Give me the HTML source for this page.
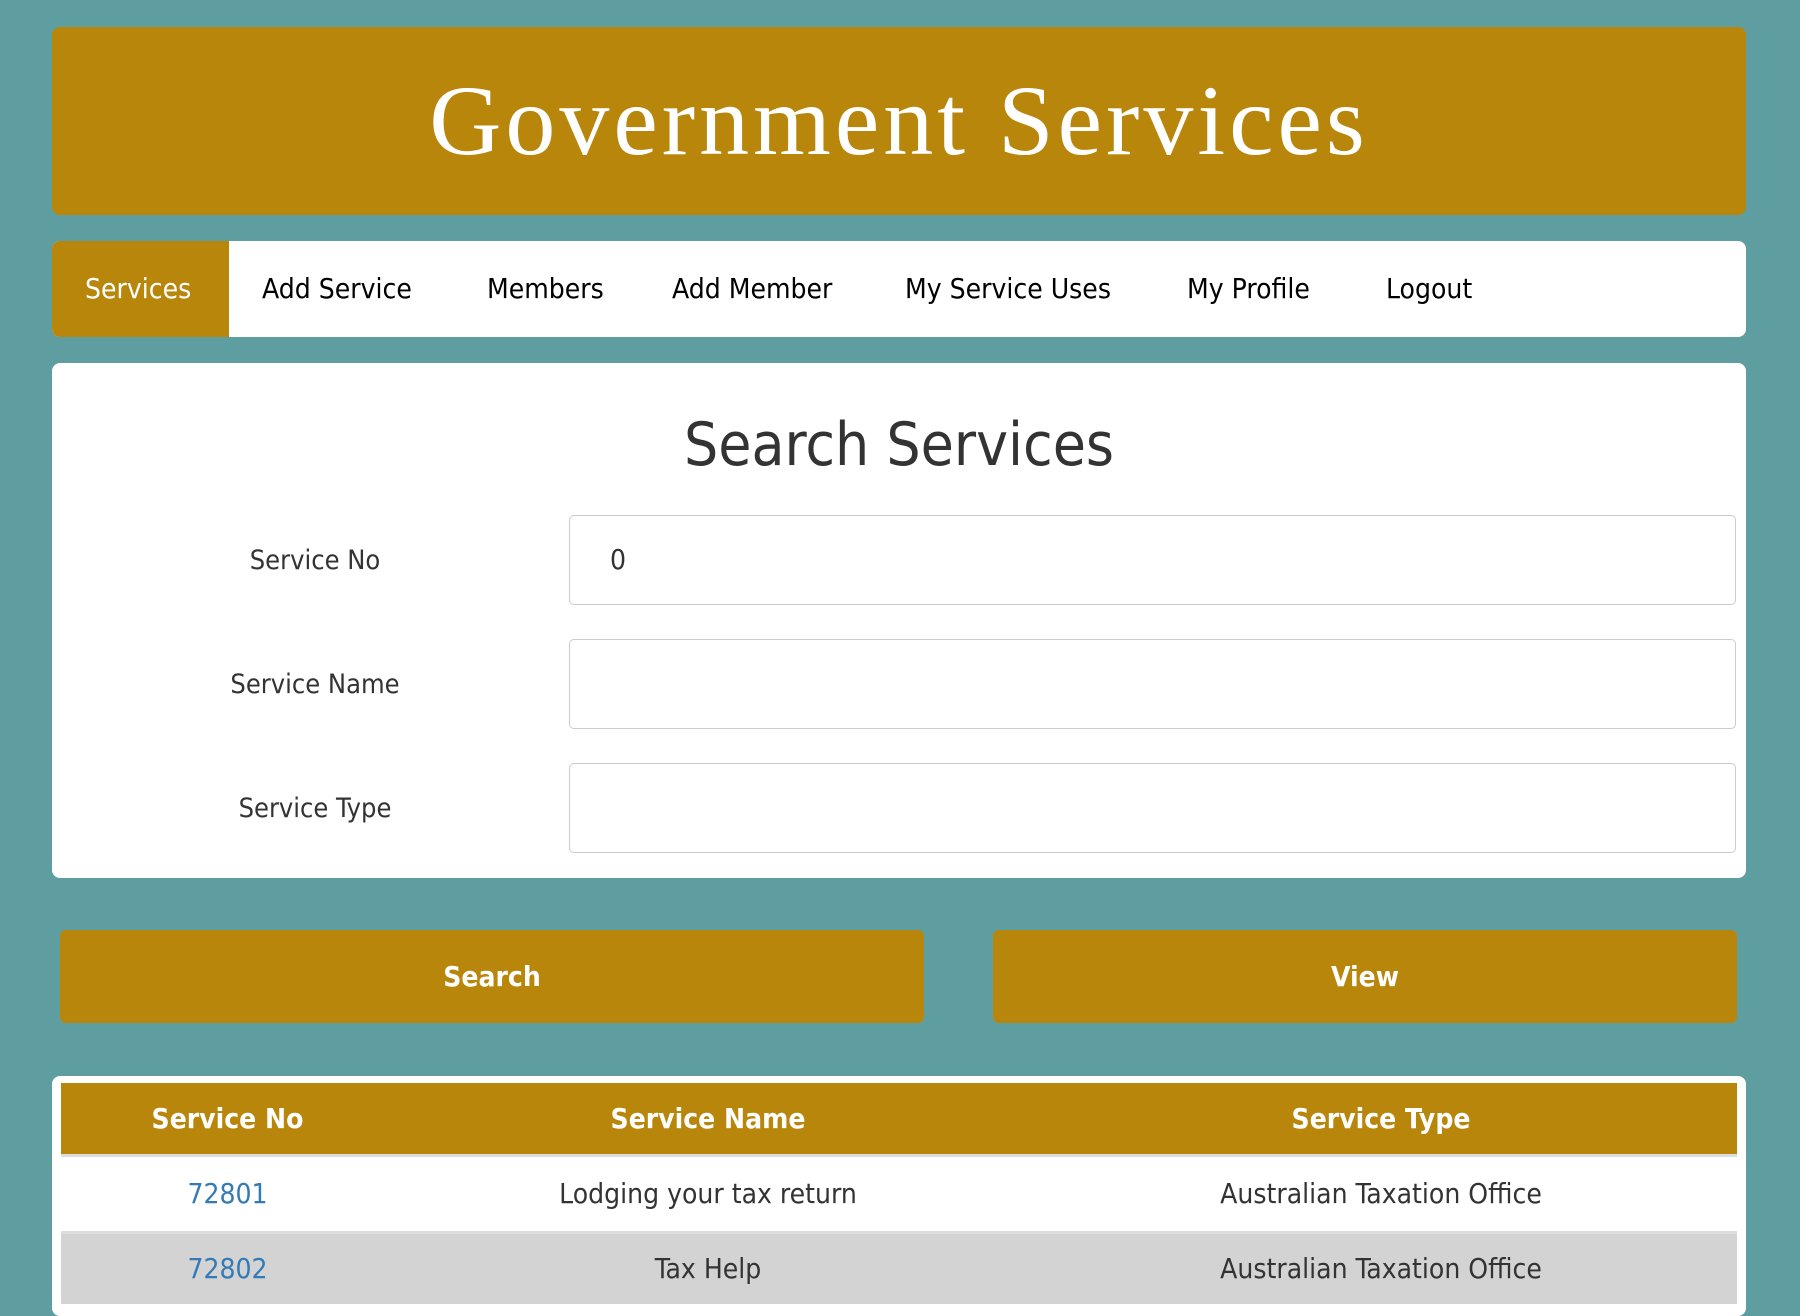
<!DOCTYPE html>
<html><head><meta charset="utf-8"><style>
*{margin:0;padding:0;box-sizing:border-box}
body{width:1800px;height:1300px;background:#5f9ea0;position:relative;overflow:hidden;font-family:"DejaVu Sans Condensed","Liberation Sans",sans-serif;color:#333}
.a{position:absolute}
.hdr{left:52px;top:27px;width:1694px;height:188px;background:#b8860b;border-radius:8px;color:#fff;font-family:"Liberation Serif",serif;font-size:100px;letter-spacing:4px;text-align:center;line-height:188px}
.nav{left:52px;top:241px;width:1694px;height:96px;background:#fff;border-radius:8px;overflow:hidden}
.nav .t{position:absolute;top:0;line-height:96px;font-size:28px;color:#000}
.act{left:0;top:0;width:177px;height:96px;background:#b8860b}
.panel{left:52px;top:363px;width:1694px;height:515px;background:#fff;border-radius:8px}
.lbl{width:400px;text-align:center;font-size:27px;left:115px}
.inp{left:569px;width:1167px;height:90px;border:1px solid #ccc;border-radius:5px;background:#fff;font-size:28px;padding-left:40px;line-height:88px}
.btn{top:930px;height:93px;background:#b8860b;border-radius:6px;color:#fff;font-size:28px;font-weight:bold;text-align:center;line-height:93px}
.tbl{left:52px;top:1076px;width:1694px;height:240px;background:#fff;border-radius:8px}
.row{left:61px;width:1676px}
.c{position:absolute;text-align:center;top:0}
</style></head><body>
<div class="a hdr">Government Services</div>
<div class="a nav">
<div class="a act"></div>
<span class="t" style="left:33px;color:#fff">Services</span>
<span class="t" style="left:210px">Add Service</span>
<span class="t" style="left:435px">Members</span>
<span class="t" style="left:620px">Add Member</span>
<span class="t" style="left:853px">My Service Uses</span>
<span class="t" style="left:1135px">My Profile</span>
<span class="t" style="left:1334px">Logout</span>
</div>
<div class="a panel"></div>
<div class="a" style="left:52px;top:410px;width:1694px;text-align:center;font-size:60px;color:#333">Search Services</div>
<div class="a lbl" style="top:545px">Service No</div>
<div class="a lbl" style="top:669px">Service Name</div>
<div class="a lbl" style="top:793px">Service Type</div>
<div class="a inp" style="top:515px">0</div>
<div class="a inp" style="top:639px"></div>
<div class="a inp" style="top:763px"></div>
<div class="a btn" style="left:60px;width:864px">Search</div>
<div class="a btn" style="left:993px;width:744px">View</div>
<div class="a tbl"></div>
<div class="a row" style="top:1083px;height:71px;background:#b8860b;color:#fff;font-weight:bold;font-size:28px;line-height:71px">
<div class="c" style="left:0;width:333px">Service No</div>
<div class="c" style="left:339px;width:616px">Service Name</div>
<div class="c" style="left:1016px;width:608px">Service Type</div>
</div>
<div class="a row" style="top:1154px;height:3px;background:#ddd"></div>
<div class="a row" style="top:1157px;height:74px;background:#fff;font-size:28px;line-height:74px">
<div class="c" style="left:0;width:333px;color:#337ab7">72801</div>
<div class="c" style="left:339px;width:616px">Lodging your tax return</div>
<div class="c" style="left:1016px;width:608px">Australian Taxation Office</div>
</div>
<div class="a row" style="top:1231px;height:3px;background:#ddd"></div>
<div class="a row" style="top:1234px;height:70px;background:#d3d3d3;font-size:28px;line-height:70px">
<div class="c" style="left:0;width:333px;color:#337ab7">72802</div>
<div class="c" style="left:339px;width:616px">Tax Help</div>
<div class="c" style="left:1016px;width:608px">Australian Taxation Office</div>
</div>
</body></html>
